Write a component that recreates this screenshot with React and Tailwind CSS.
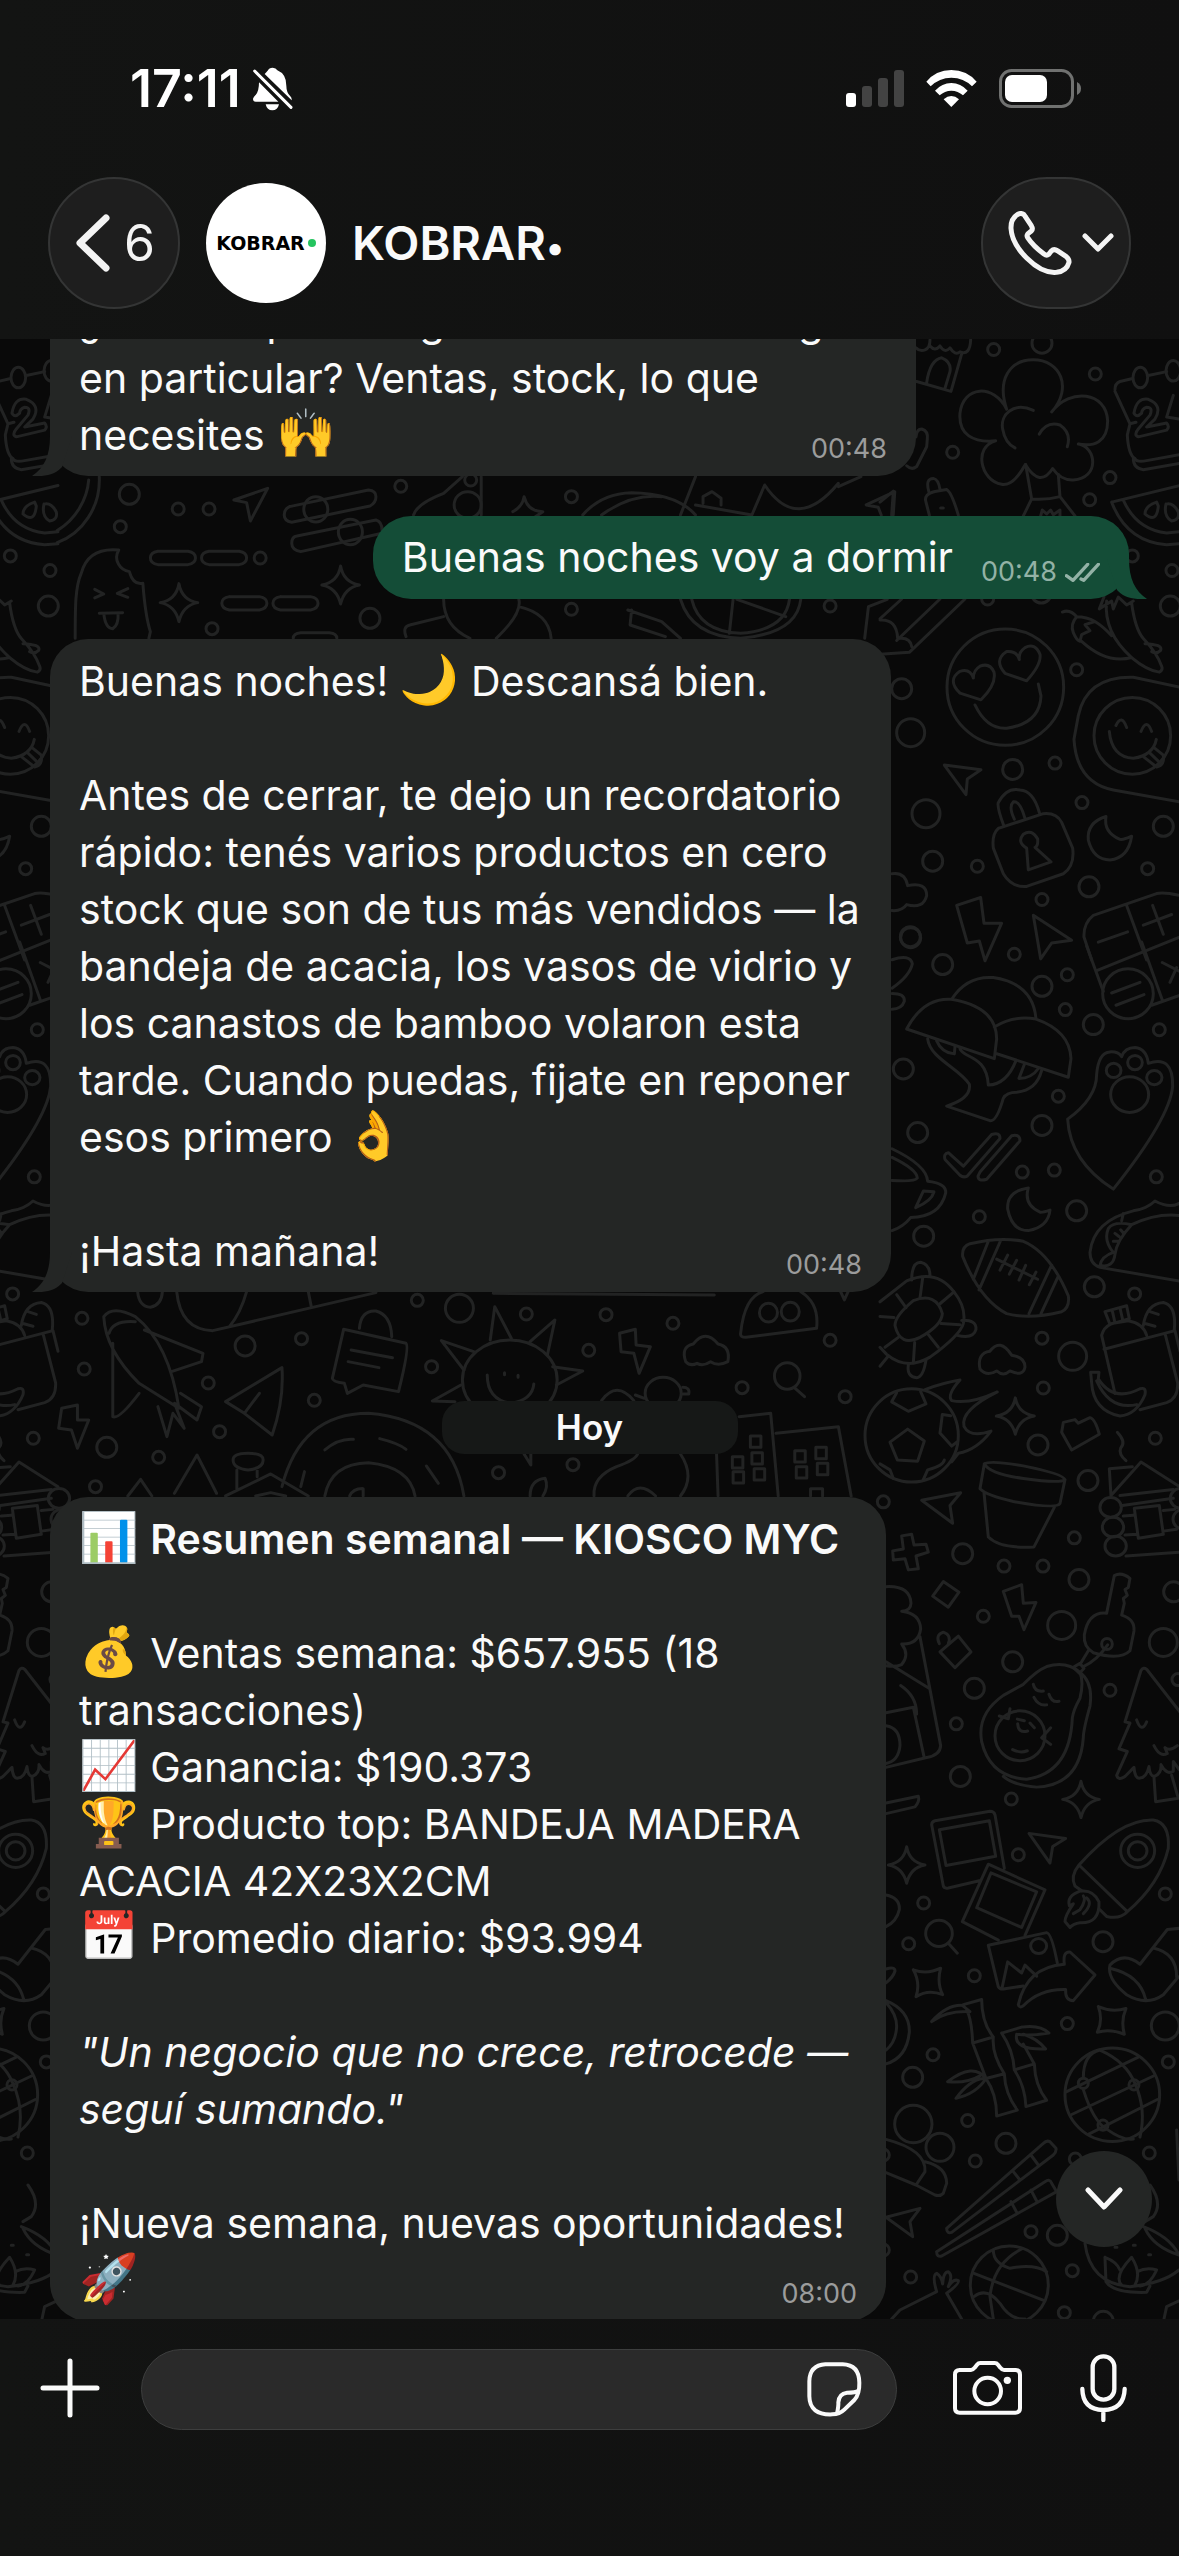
import React, { useState } from "react";

const bubbleText = "text-[41px] leading-[57px] text-[#fafafa] whitespace-pre-line";

// [cx, cy, size] per drawing group
const dotsA = [
  [341, 24, "s"], [486, 8, "m"], [646, 86, "s"], [218, 284, "s"], [690, 348, "s"], [629, 404, "s"],
  [757, 546, "s"], [876, 583, "s"], [871, 673, "m"], [590, 834, "s"], [65, 882, "m"], [92, 993, "l"],
  [398, 1086, "m"], [525, 1070, "s"], [138, 1198, "l"], [606, 1170, "s"], [850, 1230, "m"], [158, 1318, "m"],
  [292, 1331, "s"], [803, 1337, "s"], [627, 1383, "m"], [486, 1415, "s"], [91, 1509, "m"], [323, 655, "s"],
  [484, 640, "m"],
];
const dotsB = [
  [188, 62, "m"], [403, 36, "s"], [486, 117, "m"], [562, 88, "s"], [556, 176, "s"], [640, 214, "m"],
  [838, 227, "s"], [70, 326, "m"], [535, 395, "s"], [113, 487, "m"], [486, 469, "m"], [427, 587, "s"],
  [523, 582, "s"], [829, 599, "s"], [590, 685, "m"], [298, 700, "s"], [131, 749, "m"], [643, 877, "m"],
  [764, 895, "s"], [486, 1007, "s"], [578, 1053, "l"], [490, 1133, "s"], [474, 1277, "m"], [826, 1260, "s"],
  [624, 1367, "m"], [583, 1512, "s"], [248, 1552, "m"], [10, 1421, "s"], [92, -6, "m"],
];
const dotsC = [
  [372, 66, "s"], [489, 66, "s"], [597, 100, "m"], [310, 193, "s"], [545, 216, "l"], [398, 308, "m"],
  [283, 375, "m"], [229, 465, "s"], [690, 380, "s"], [850, 259, "l"], [881, 131, "m"], [894, 353, "s"],
  [241, 598, "m"], [394, 655, "s"], [415, 796, "s"], [131, 918, "s"], [86, 1021, "s"], [669, 1016, "m"],
  [856, 895, "s"], [283, 1102, "s"], [562, 1223, "s"], [856, 1229, "l"], [159, 1302, "s"], [98, 1359, "m"],
  [263, 1468, "s"], [865, 1320, "s"],
];
const dotsD = [
  [172, 523, "m"], [237, 567, "s"], [278, 567, "s"], [160, 620, "s"], [346, 714, "s"], [282, 926, "s"],
  [492, 895, "m"], [533, 499, "s"], [760, 530, "s"], [760, 868, "s"], [1104, 858, "s"], [626, 480, "s"],
];
const dotsE = [
  [109, 355, "s"], [326, 438, "m"], [401, 416, "s"], [112, 507, "s"], [277, 549, "s"], [418, 601, "s"],
  [142, 742, "m"], [292, 695, "s"], [211, 772, "s"], [127, 860, "s"], [555, 301, "s"], [611, 325, "l"],
  [700, 342, "s"], [806, 344, "s"], [783, 451, "s"], [895, 370, "s"], [574, 500, "s"], [987, 563, "s"],
  [1104, 421, "s"], [1124, 590, "s"], [663, 818, "s"], [762, 794, "s"],
];
const dotsF = [
  [480, 52, "l"], [678, 40, "m"], [586, 93, "s"], [1108, 69, "s"], [886, 87, "s"], [753, 305, "s"],
  [832, 316, "m"], [392, 441, "s"], [877, 422, "s"], [853, 548, "s"], [970, 574, "m"], [310, 75, "s"],
  [310, 360, "s"],
];

const radius = { s: 6, m: 10, l: 14 };

const star = (x, y, rx, ry) =>
  `M${x} ${y - ry}Q${x + rx * 0.15} ${y - ry * 0.15} ${x + rx} ${y}Q${x + rx * 0.2} ${y + ry * 0.15} ${x} ${y + ry}Q${x - rx * 0.2} ${y + ry * 0.15} ${x - rx} ${y}Q${x - rx * 0.15} ${y - ry * 0.15} ${x} ${y - ry}Z`;

const oval = (x, y, rx, ry) =>
  `M${x - rx} ${y}a${rx} ${ry} 0 1 0 ${rx * 2} 0a${rx} ${ry} 0 1 0 ${-rx * 2} 0`;

function Doodles({ x, y, sx, sy, dots, paths }) {
  return (
    <g transform={`translate(${x} ${y}) scale(${sx} ${sy})`}>
      {dots.map(([cx, cy, size]) => (
        <ellipse
          key={`${cx}-${cy}`}
          cx={cx}
          cy={cy}
          rx={radius[size] / sx}
          ry={radius[size] / sy}
          vectorEffect="non-scaling-stroke"
        />
      ))}
      {paths.map((d) => (
        <path key={d} d={d} vectorEffect="non-scaling-stroke" />
      ))}
    </g>
  );
}

const pathsA = [
  // shop and bottle
  "M110 105L213 130L245 35M140 108Q150 50 185 45Q215 55 210 80L195 122M108 20Q120 30 135 25Q150 20 150 0M150 15Q165 30 180 15Q195 35 210 20Q225 40 240 30Q270 40 272 0",
  "M108 245Q110 225 125 225Q145 230 142 250L140 270L110 320Q95 330 80 318",
  // tree
  "M380 175C350 100 390 50 460 50C540 50 580 120 515 182C570 120 680 130 683 205C683 260 640 270 595 263C650 270 660 350 580 354C550 355 530 340 518 325Q480 375 436 315Q400 370 365 365C300 355 280 270 347 255C280 260 235 240 240 185C250 115 340 110 380 175",
  "M460 178C400 155 360 190 368 225Q375 260 405 273M478 238Q500 205 540 215Q575 235 562 270M437 315L455 402Q500 405 540 396L535 340M455 402L430 445M540 396L585 445M482 445L487 430L500 440L512 430L520 442L540 430V445",
  "M165 383L200 378Q215 385 235 443M165 383Q130 390 138 410L148 443M147 385Q135 350 160 350Q175 352 180 378M182 425h8M0 410L40 382L35 443",
  // calendar
  "M705 125Q705 110 720 105L755 98M805 90L860 80M705 130L750 212L742 240Q745 290 765 300Q770 310 800 305L900 290M760 300Q760 325 790 328L900 312M750 212L768 208",
  oval(781, 95, 22, 26),
  oval(880, 78, 22, 26),
  "M762 185Q770 145 805 150Q850 165 825 200L800 220L860 210Q870 220 860 228L775 245Q760 240 775 225L810 190Q820 170 800 170Q785 175 785 185Q770 198 762 185M880 140L860 195L897 200",
  // watermelon
  "M695 410L900 368M695 410Q740 510 860 518L900 515M730 405Q770 480 860 488L900 485M830 410Q795 420 795 440Q830 465 835 420ZM858 415Q850 445 875 458Q900 455 895 435Q880 410 858 415",
  "M65 655L0 705M180 655L50 760M255 655L88 790L0 795M0 708Q50 705 53 755Q90 750 95 775",
  // heart eyes
  oval(376, 878, 175, 147),
  "M280 855Q270 830 240 838Q200 860 240 893L303 910Q350 870 342 840Q330 815 300 825Q280 835 280 855M418 808Q410 785 380 788Q340 810 375 843L440 862Q485 820 480 795Q465 765 435 778Q415 790 418 808M285 923Q320 985 380 982Q480 970 483 900L475 870",
  // chillies
  "M547 688Q570 680 590 700Q570 720 580 740Q590 760 600 762L605 745L630 735L615 720L645 712Q620 700 590 700M605 762Q680 820 755 803M645 712Q670 725 695 748M680 660Q670 740 755 803Q800 835 838 840Q850 835 845 825Q830 790 790 755Q765 730 755 665M658 680L672 650M700 680L715 650L740 670L760 660M658 680L695 660L700 680M795 768Q850 770 842 785Q830 795 815 788",
  "M900 878L760 853Q620 850 595 950L582 1010Q590 1120 700 1138L900 1168M688 990Q695 1055 760 1058Q820 1050 829 1010M708 975Q725 945 740 980M783 990Q800 955 815 990M792 1055L830 1080Q855 1075 850 1050L825 1033M810 1045L835 1065",
  oval(757, 1001, 115, 97),
  "M193 1075L303 1087L262 1110L258 1150Z",
  // padlock
  "M372 1230Q350 1180 355 1170Q380 1130 420 1138Q460 1140 478 1195M403 1212Q385 1180 400 1168Q420 1165 435 1210M355 1235L490 1198Q530 1195 545 1220L578 1285Q585 1330 550 1350L440 1382Q395 1385 370 1350L340 1285Q335 1250 355 1235M440 1285Q410 1270 430 1250Q455 1235 473 1262Q475 1280 465 1283L513 1320L445 1340Z",
  "M678 1205Q620 1220 625 1265Q640 1315 690 1315Q745 1310 755 1255Q730 1265 720 1263Q670 1245 678 1205",
  "M36 1350Q75 1345 83 1380Q140 1370 140 1405Q130 1440 80 1428Q65 1445 36 1443",
  "M230 1430L302 1410L312 1475L365 1475L315 1570L298 1520L262 1525Z",
  "M460 1455L575 1518L515 1525L482 1565Z",
  "M900 1405Q850 1395 830 1400L640 1455Q610 1475 612 1510L635 1568M740 1430L800 1568M655 1523L743 1497M790 1480L875 1453M818 1430L850 1503M650 1595L900 1510",
];

const pathsB = [
  "M620 15L670 130M785 5L847 152M815 165L900 140M695 134L780 107M708 165L792 138M847 57L900 80M870 107L890 70",
  oval(744, 136, 76, 63),
  "M36 50Q90 35 97 60Q90 90 36 122M36 135Q75 135 73 155Q65 175 36 175",
  // mushrooms
  "M80 225Q130 145 215 150Q350 170 350 250L343 300ZM215 150Q260 90 340 95Q460 110 468 200M343 220Q400 190 468 200Q570 230 573 300L565 347L348 287",
  "M143 250C150 300 240 325 268 365Q275 400 200 420L330 457Q350 460 370 400Q380 385 410 385Q470 380 485 330M240 275C250 300 320 290 325 367Q380 365 408 305M170 255Q185 285 223 288L225 270M433 315L417 350Q455 350 475 325",
  // paw
  "M563 453Q650 400 650 340Q655 285 690 283Q715 282 725 295Q735 272 765 272Q800 275 805 312Q880 290 878 370Q870 450 700 630Q570 560 563 453",
  oval(749, 391, 57, 45),
  oval(701, 330, 22, 18),
  oval(765, 310, 22, 18),
  oval(823, 348, 23, 18),
  "M195 555Q190 540 205 538L250 572L335 492Q360 485 360 502L262 597Q250 602 240 595ZM300 587L395 495Q420 490 420 508L320 605Q295 612 294 597Z",
  // cup
  "M36 528Q140 570 143 610Q200 615 197 640Q180 700 92 702Q70 725 36 735M36 550Q110 580 112 602Q105 612 36 608M130 635L162 637Q155 660 107 677Z",
  "M445 627Q380 635 383 680Q395 735 445 735Q505 725 510 683Q485 690 480 688Q430 670 445 627",
  // football
  "M248 800Q245 775 270 768Q360 750 430 762Q510 790 565 900Q570 930 545 940Q450 960 380 945Q300 910 248 800M325 762L280 858M362 760L297 885M515 822L447 945M535 850L483 945M350 807L473 858M383 797L360 835M410 810L388 845M437 823L417 860M468 840L448 872",
  // taco
  "M900 665Q870 680 825 660Q800 680 760 685Q640 710 630 790Q630 820 660 828L900 863M755 720Q830 690 900 697M755 720Q710 760 705 795Q700 830 660 823Q665 800 700 790Q670 760 685 730Q700 710 755 720M725 710L730 692M705 742l12 8M700 762h14M722 733l10 10",
  // turtle
  "M95 860Q95 815 122 815Q150 820 150 850M0 915L80 862Q170 830 222 890Q260 930 250 970Q240 1000 150 1055Q80 1090 20 1048L0 1030M100 912Q170 890 187 945Q185 975 120 1005Q60 1030 45 975Q45 950 100 912",
  "M128 855L120 905M222 890L180 920M240 973L183 970M175 1030L145 998M100 1070L104 1018M15 1030L55 1005M0 952L42 955M50 897L78 930M245 962Q290 960 288 985Q280 1010 232 1000M85 1075Q80 1105 110 1107Q130 1105 138 1062M0 1078L25 1052",
  "M300 1085Q290 1045 330 1040Q360 1005 395 1050Q435 1055 435 1080Q430 1105 390 1090Q370 1105 350 1090Q320 1105 300 1085",
  // groceries
  "M665 1000Q670 980 695 970L745 963Q790 970 800 1000M672 1035L885 988M665 1000L705 1147M675 940L740 925L748 958L690 972ZM697 938l8 30M720 930l8 30M790 975Q800 920 850 917Q890 925 883 985M810 940L835 947M795 970L825 977M885 988L900 1040M855 995L893 1120Q895 1160 860 1170L780 1188",
  "M632 1093L657 1093L655 1110Q700 1170 780 1135Q800 1130 795 1150Q770 1200 720 1204Q640 1190 635 1120ZM650 1115Q690 1190 770 1175",
  // ball on fire
  oval(95, 1253, 140, 118),
  "M83 1237L133 1267L113 1318L52 1315L30 1270ZM50 1145L35 1168L85 1192L138 1173L122 1142M212 1203L187 1200L180 1247L215 1280L230 1270M193 1315Q190 1330 143 1340L130 1365M0 1325L30 1340L40 1362",
  "M135 1137Q190 1120 240 1113Q200 1150 215 1165Q270 1175 352 1143Q240 1190 252 1230Q270 1260 333 1242Q290 1290 235 1298L215 1320",
  star(406, 1204, 57, 46),
  "M550 1220L585 1213L595 1222L630 1208Q645 1210 658 1250L575 1290L545 1245ZM712 1245Q740 1270 722 1285Q715 1300 738 1317",
  // pot
  "M313 1325Q330 1315 430 1330Q550 1350 555 1365L540 1425Q530 1440 400 1420Q320 1405 300 1388ZM313 1325Q330 1350 430 1362Q540 1375 555 1365M312 1398L325 1510Q360 1540 462 1535L523 1435",
  "M125 1417L242 1398L210 1430L218 1475Z",
  "M65 1507L95 1503L102 1530L138 1528L145 1548L108 1558L115 1590L85 1593L75 1565L40 1568L38 1545L70 1540Z",
  // cabin
  "M693 1405L688 1337L757 1332M693 1405L783 1320L900 1383M720 1405L880 1390M727 1430L880 1412M730 1457L760 1455M850 1443L885 1440M735 1505L770 1503M850 1495L890 1490M738 1558L900 1548M763 1437L838 1430L850 1503L775 1513Z",
  oval(692, 1435, 32, 25),
  oval(699, 1485, 32, 25),
  oval(707, 1533, 32, 25),
  oval(903, 1412, 32, 25),
  oval(911, 1465, 32, 25),
];

const pathsC = [
  // ice cream
  "M18 118Q90 115 93 160Q92 180 65 180Q120 185 122 225Q115 265 65 263Q90 290 65 315Q45 322 18 318M120 245L182 520Q180 545 140 550L18 575M18 308L147 375M62 368Q110 395 110 440M18 437L100 423L132 548M18 470Q60 475 60 520Q55 560 18 565",
  "M190 105L237 132L205 170L158 142ZM235 243L273 283L225 323L180 283ZM178 262Q165 240 190 233Q215 240 205 262",
  "M370 130L425 113L430 160L468 158L432 227L417 193L395 193Z",
  // key
  "M680 185L703 90Q725 80 750 97L745 120L735 125L742 140L730 148L733 160L725 190Q765 200 762 230L750 280Q720 305 640 285Q610 270 613 240Q625 180 680 185M683 265Q650 305 610 320M625 280L600 315M580 322L600 312L612 325L598 337Z",
  oval(681, 263, 16, 14),
  // avocado
  "M600 335Q560 305 500 320Q470 330 430 365L370 393Q290 440 305 510Q330 600 440 605Q570 590 577 450Q580 430 600 400Q612 360 600 335Q640 360 630 420Q610 480 610 500Q600 620 470 625Q400 620 370 598",
  oval(420, 495, 75, 63),
  "M460 365Q465 385 490 382M462 398Q475 420 500 417M507 390Q515 412 537 408M413 465Q415 490 443 483M412 453L433 457M450 463L463 475M398 530Q420 540 442 533M358 445L385 452L390 427M512 475L485 500L512 517",
  // pine
  "M783 330Q790 320 800 327L900 435M783 330L735 460L750 463L717 528L742 535L710 595Q715 610 735 598L762 575Q765 605 780 602Q800 600 807 573Q810 600 825 597Q845 590 843 568Q860 595 880 585V560L897 580M770 455Q785 490 800 460M822 520Q840 550 862 540L855 525Q870 535 892 520M822 600L827 662L895 653L875 595",
  star(603, 656, 55, 46),
  star(80, 822, 55, 46),
  "M18 665L115 648Q120 660 105 675L18 692",
  // photos
  "M155 720Q155 712 165 710L330 686Q342 686 345 695L373 830M155 720L190 875Q192 882 205 880L298 862M178 733L328 710L347 800L198 823ZM325 820L495 885L435 1000M325 820L247 965L355 1012M333 842L470 890L425 980L290 930Z",
  "M325 1025L500 993Q515 995 532 1070M325 1025L355 1130Q360 1138 375 1135L430 1128M367 1130L383 1067L425 1095L435 1075L470 1103",
  oval(476, 1027, 24, 19),
  "M415 1175Q440 1080 553 1073Q548 1040 570 1042L645 1100L580 1165Q555 1165 557 1137Q480 1135 430 1178Q418 1185 415 1175",
  "M447 742L557 755L518 775L510 817Z",
  // rocket
  "M597 822Q720 705 820 708Q870 715 865 780Q840 870 742 940Q720 960 680 952L660 935M597 822Q570 850 585 875L605 887M597 822L742 940",
  oval(773, 786, 51, 42),
  oval(773, 786, 28, 23),
  "M600 888Q560 900 568 925L580 920Q555 950 555 965L570 980Q580 970 600 968Q660 970 657 915Q640 885 605 888M610 900Q620 910 600 935L580 945M620 905Q640 920 610 945",
  oval(177, 995, 40, 33),
  "M205 1020L232 1045",
  "M900 982L862 985L780 1073Q730 1040 690 1075Q680 1110 740 1150Q800 1180 850 1150L895 1105M690 1083Q780 1100 797 1162M820 1032Q890 1045 890 1105",
  "M100 1087Q140 1100 182 1083Q170 1120 188 1150Q145 1135 108 1155Q122 1120 100 1087M655 1180Q695 1195 738 1185Q722 1215 733 1250Q690 1235 652 1245Q670 1215 655 1180",
  // bamboo
  "M155 1218Q200 1190 270 1193L247 1177Q200 1175 155 1218M250 1175L305 1162Q305 1220 340 1257L278 1272Q275 1210 260 1190M278 1272L318 1362L373 1350Q335 1300 340 1257M318 1362Q350 1400 350 1457L412 1442Q375 1400 373 1350M318 1362Q280 1320 203 1370Q260 1375 300 1355M310 1362Q270 1365 228 1412Q290 1400 318 1362",
  "M365 1247L425 1232M365 1247Q400 1290 403 1340L463 1325L430 1275M403 1340Q435 1380 438 1433L500 1417Q465 1380 463 1325M425 1232Q480 1225 507 1247Q450 1255 410 1250M410 1250Q400 1290 497 1287Q470 1260 430 1250",
  // globe
  oval(697, 1403, 142, 118),
  "M560 1395L775 1308M575 1453L822 1355M625 1503L832 1415M610 1360Q610 1300 660 1290Q740 1320 765 1375Q800 1440 780 1510M610 1390Q640 1470 680 1490Q730 1520 760 1515",
  oval(610, 1374, 15, 13),
  oval(762, 1378, 15, 13),
  oval(669, 1480, 15, 13),
  "M18 1165Q90 1190 88 1245Q80 1310 18 1325M18 1170Q50 1200 50 1230Q48 1270 18 1290M18 898Q60 905 58 935Q50 965 18 978M18 1085Q45 1078 45 1090Q40 1105 18 1120",
];

const pathsD = [
  "M132 470C134 560 110 640 76 668M118 480C116 540 100 600 76 632",
  "M311 540L356 505L333 603L328 548Z",
  "M385 560L490 510Q500 512 500 530T492 558L388 607Q378 603 378 585T385 560M395 648L500 600Q508 605 508 630M508 640L400 695Q388 690 388 670T395 648",
  oval(420, 568, 16, 38),
  oval(466, 636, 16, 38),
  "M210 694h40q10 4 10 20t-10 20h-40q-10-4-10-20t10-20M278 694h40q10 4 10 20t-10 20h-40q-10-4-10-20t10-20M305 830h40q10 4 10 20t-10 20h-40q-10-4-10-20t10-20M373 830h40q10 4 10 20t-10 20h-40q-10-4-10-20t10-20M390 955q0-15 10-17h38q10 2 10 17",
  star(453, 795, 25, 57),
  star(238, 848, 25, 57),
  // popsicle
  "M100 955C100 860 100 800 108 760C115 700 135 685 158 690C150 720 160 750 172 755C175 780 180 795 190 790C192 850 195 900 200 935L198 955M126 808l12 14l-12 12M170 806l-14 14l14 12M132 880L163 878M138 880Q140 925 150 926Q158 915 157 880",
  "M550 585Q555 550 590 520L615 470M640 470V585M682 575Q695 560 697 530Q702 575 722 575L712 590",
  oval(622, 555, 18, 40),
  "M775 585Q800 520 840 518Q900 520 925 585M800 585Q840 520 880 530M905 585L925 470M925 555L1000 585L1017 495Q1060 640 1115 490M1115 500L1145 470M1188 585L1190 515L1152 555L1168 562L1172 585M935 550v-20l12-15l12 20v20",
  "M540 950Q535 920 545 915L590 890M590 838Q590 920 625 955M690 838Q695 880 660 955M690 860Q730 880 733 955M835 870L880 905L905 955M840 870L838 915L885 950M905 838Q920 950 985 955Q1060 940 1065 838M920 838Q930 935 985 940Q1045 930 1050 838M975 838L970 940M980 838L1045 890",
  "M1150 955L1155 860L1180 838",
];

const pathsE = [
  "M235 275Q240 390 283 392L500 278M328 275Q320 340 305 380M410 275L414 320M183 275Q185 320 200 322Q215 315 216 275M656 280L950 285",
  // shuttle
  "M138 350Q150 315 180 350Q225 430 238 625L185 550Q140 450 138 350M145 400Q150 360 180 365M192 390L270 460L268 485L228 515M150 430L150 650Q158 660 185 580M210 620L222 710L230 640L245 685L232 610L262 660L268 620L240 580",
  "M82 625L103 615V660L118 660L103 745L95 690L78 685Z",
  "M375 503L300 605L325 640L362 705Q378 600 375 503M325 640L345 580",
  "M457 388L540 430Q545 440 530 575L483 555L462 580L458 550Q442 545 442 535ZM478 385Q480 330 500 333Q520 345 521 410M467 450L522 473M463 485L504 503",
  // sun
  oval(678, 540, 63, 120),
  "M652 420L658 320L680 415M705 425L738 360L728 465M735 500L775 513L740 555M630 455L587 422L617 510M613 555L575 603L605 605M648 525Q648 600 680 610Q708 600 710 552M671 518v6M689 526v6M697 762L706 795V762",
  "M824 400L845 388L846 435L865 440L850 520L843 460L826 455Z",
  "M912 485Q905 440 922 432Q938 385 955 432Q972 440 968 485Q955 500 945 485Q935 500 927 490Q918 500 912 485",
  "M985 400Q990 290 1015 275M1065 275Q1090 310 1086 385L992 412Q984 412 985 400M1118 275l5 25l5-25",
  oval(1022, 338, 12, 28),
  oval(1051, 335, 12, 28),
  oval(1047, 528, 17, 40),
  "M1056 562L1070 590",
  oval(882, 580, 24, 48),
  "M800 602Q820 540 843 602M908 562q10 0 8 20h-8M845 585l12 10",
  // rainbow
  "M375 860Q400 640 490 640Q600 660 617 888M432 888Q440 790 490 788Q545 800 552 888M432 750Q450 715 470 718M505 716Q530 730 540 748M567 798L583 850M405 815L400 860M465 888Q470 865 483 866V888",
  "M170 888L187 838L202 888M232 880L262 765L288 880M300 888L360 822L410 888M340 888L360 878L380 888M310 780Q310 760 330 760T350 780Q350 805 330 810Q310 805 310 780M315 810V870M342 810V830",
  // buildings
  "M955 888L953 762M983 650L1025 640L1035 888M1032 700L1115 680L1132 888",
  "M998 708h14v34h-14zM1000 758h14v34h-14zM974 770h14v34h-14zM975 815h14v34h-14zM1003 806h14v34h-14zM1057 752h14v34h-14zM1085 742h14v34h-14zM1059 800h14v34h-14zM1087 790h14v34h-14zM1078 888v-22h16v22",
  "M790 888Q788 830 820 800Q845 780 848 762M905 762Q925 830 905 888M705 888Q705 840 725 835Q730 860 722 888M835 888Q850 840 872 888",
];

const pathsF = [
  oval(400, -18, 56, 56),
  "M318 28Q440 60 435 125L408 165L318 128M435 95Q500 110 500 160L490 190Q480 200 465 195L408 165",
  // chopsticks
  "M500 295L790 40Q800 30 810 35L828 55Q830 65 820 75L515 307Q500 312 500 295M700 125L720 150M755 78L775 105M470 365L795 155Q810 145 815 160L830 185L485 378Q470 382 470 365M693 215L710 247M753 180L770 213",
  "M318 262L420 235L390 275L398 320Z",
  // basketball
  oval(688, 465, 117, 117),
  "M582 430L793 512M640 360Q640 400 690 415Q760 400 800 425M725 357Q640 400 630 500L640 567M582 500Q620 470 660 520Q690 570 735 567",
  "M335 567L360 540L470 485Q455 435 470 430Q485 440 488 462Q490 425 505 425Q520 435 505 470Q520 445 535 452Q540 460 500 490L545 567",
  // lotus bowl
  "M915 340Q930 460 1050 470Q1150 460 1197 420M975 382L978 455Q1000 490 1100 487L1110 468M975 382Q1010 395 1020 420M1025 465Q1000 440 1055 382Q1085 430 1065 465M1072 425Q1100 410 1130 420Q1110 465 1080 468M1110 165Q1150 220 1120 260L1095 275M1090 290Q1170 320 1197 375M1095 295Q1120 350 1197 375M1005 352h6M1060 346h6M1106 374h6M1197 513L1160 530L1152 567M1190 0L1197 150",
];

function Wallpaper() {
  return (
    <svg
      className="absolute inset-0 h-full w-full"
      viewBox="0 339 1179 1980"
      preserveAspectRatio="xMidYMin slice"
      fill="none"
      stroke="#222323"
      strokeWidth="3"
      strokeLinecap="round"
      strokeLinejoin="round"
      aria-hidden="true"
    >
      <defs>
        <g id="doodle-column">
          <Doodles x={880} y={340} sx={0.3333} sy={0.3954} dots={dotsA} paths={pathsA} />
          <Doodles x={880} y={940} sx={0.3333} sy={0.3954} dots={dotsB} paths={pathsB} />
          <Doodles x={880} y={1540} sx={0.3333} sy={0.3954} dots={dotsC} paths={pathsC} />
          <Doodles x={780} y={2130} sx={0.3333} sy={0.3333} dots={dotsF} paths={pathsF} />
        </g>
      </defs>
      <use href="#doodle-column" />
      <use href="#doodle-column" x="-1122" />
      <Doodles x={0} y={320} sx={0.7519} sy={0.3333} dots={dotsD} paths={pathsD} />
      <Doodles x={0} y={1200} sx={0.7519} sy={0.3333} dots={dotsE} paths={pathsE} />
    </svg>
  );
}

function StatusBar() {
  return (
    <div className="flex h-[177px] items-center justify-between pl-[130px] pr-[98px]">
      <div className="flex items-center gap-3">
        <span className="text-[52px] leading-[60px] font-semibold text-white">17:11</span>
        <svg className="h-[44px] w-[40px]" viewBox="0 0 120 130" fill="#fff" role="img" aria-label="Silencio">
          <path d="M18 45L76 103H8Q0 103 0 94Q2 88 8 83Q18 72 18 45ZM35 20Q43 11 44 10Q48 1 59 1Q69 1 73 9Q100 20 100 55Q100 75 112 87Q117 92 116 99ZM38 111H78Q74 129 58 129Q42 129 38 111Z" />
          <path d="M5 11L114 120" stroke="#fff" strokeWidth="9" strokeLinecap="round" />
        </svg>
      </div>
      <div className="flex items-center gap-[22px]">
        <svg className="h-[38px] w-[58px]" viewBox="0 0 58 38" aria-hidden="true">
          <rect x="0" y="23" width="10" height="14" rx="3" fill="#fff" />
          <rect x="16" y="16" width="10" height="21" rx="3" fill="#434343" />
          <rect x="32" y="8" width="10" height="29" rx="3" fill="#434343" />
          <rect x="48" y="0" width="10" height="37" rx="3" fill="#434343" />
        </svg>
        <svg className="h-[38px] w-[51px]" viewBox="0 0 153 114" fill="#fff" aria-hidden="true">
          <path d="M1 35Q30 0 76 0Q122 0 152 35L138 49Q113 23 76 23Q40 23 14 49Z" />
          <path d="M27 62Q48 39 76 39Q104 39 125 62L111 76Q96 62 76 62Q56 62 41 76Z" />
          <path d="M53 88Q64 78 76 78Q88 78 99 88L76 111Z" />
        </svg>
        <svg className="h-[40px] w-[82px]" viewBox="0 0 82 40" aria-hidden="true">
          <rect x="1.5" y="1.5" width="72" height="36" rx="11" fill="none" stroke="#707170" strokeWidth="3" />
          <rect x="6" y="6" width="42" height="27" rx="7" fill="#fff" />
          <path d="M78 13Q82 15 82 19.5T78 26Z" fill="#707170" />
        </svg>
      </div>
    </div>
  );
}

function ChatHeader() {
  return (
    <div className="flex items-center px-12 pb-[30px]">
      <button
        type="button"
        aria-label="Volver"
        className="flex h-[132px] w-[132px] items-center gap-[14px] rounded-full border-2 border-[#343535] bg-[#1e1e1e] pl-[26px] text-[50px] text-[#f4f4f4]"
      >
        <svg className="h-[58px] w-[34px]" viewBox="0 0 34 58" fill="none" stroke="#f4f4f4" strokeWidth="7" strokeLinecap="round" strokeLinejoin="round">
          <path d="M30 4L4 29L30 54" />
        </svg>
        6
      </button>
      <div className="ml-[26px] flex h-[120px] w-[120px] items-center justify-center gap-[3px] rounded-full bg-white font-['DejaVu_Sans'] text-[19px] font-bold text-black">
        KOBRAR
        <span className="h-2 w-2 rounded-full bg-[#25c45f]" />
      </div>
      <h1 className="ml-[26px] flex-1 text-[47px] font-semibold text-[#fafafa]">
        KOBRAR<span className="text-4xl">•</span>
      </h1>
      <button
        type="button"
        aria-label="Llamar"
        className="flex h-[132px] w-[150px] items-center justify-center gap-[10px] rounded-full border-2 border-[#343535] bg-[#1e1e1e] pl-[10px]"
      >
        <svg className="h-[64px] w-[64px]" viewBox="0 0 192 192" fill="none" stroke="#f4f4f4" strokeWidth="15" strokeLinejoin="round">
          <path d="M48 11Q38 4 28 11Q8 24 9 52C12 110 88 190 146 184Q176 180 183 154Q184 144 175 137L148 119Q138 112 130 120L122 130Q116 135 108 129Q76 106 59 80Q55 74 60 68L70 60Q76 54 70 44L52 17Q50 13 48 11Z" />
        </svg>
        <svg className="h-[20px] w-[32px]" viewBox="0 0 32 20" fill="none" stroke="#f4f4f4" strokeWidth="5" strokeLinecap="round" strokeLinejoin="round">
          <path d="M3 3L16 16L29 3" />
        </svg>
      </button>
    </div>
  );
}

// Emoji are set a little larger than the letters around them
const withEmoji = (text) =>
  text.split(/(\p{Extended_Pictographic})/u).map((part, i) =>
    i % 2 ? (
      <span key={i} className="text-5xl leading-10">
        {part}
      </span>
    ) : (
      part
    )
  );

function Incoming({ time, tail, className, children }) {
  return (
    <article className={`relative rounded-[38px] bg-[#242625] px-[29px] pt-[14px] pb-3 ${className}`}>
      <div className={bubbleText}>{children}</div>
      <time className="absolute right-[29px] bottom-[13px] text-[27px] leading-7 text-[#9b9c9c]">{time}</time>
      {tail && (
        <svg className="absolute bottom-0 -left-[18px] h-10 w-10" viewBox="0 0 40 40" fill="#242625" aria-hidden="true">
          <path d="M18 0C18 20 12 32 0 40C14 41 24 38 30 31L40 0Z" />
        </svg>
      )}
    </article>
  );
}

function Composer() {
  const [message, setMessage] = useState("");

  return (
    <footer className="relative flex h-[237px] items-start bg-linear-to-r from-[#131413] to-[#101010] pt-[30px] pr-[52px] pl-10">
      <button type="button" aria-label="Adjuntar" className="flex h-[78px] w-[60px] items-center">
        <svg className="h-[60px] w-[60px]" viewBox="0 0 60 60" stroke="#fafafa" strokeWidth="5" strokeLinecap="round">
          <path d="M3 30H57M30 3V57" />
        </svg>
      </button>
      <div className="mr-14 ml-[41px] flex h-[81px] min-w-0 flex-1 items-center rounded-full border border-[#3d3e3e] bg-[#2a2a2a] pr-[34px] pl-10">
        <input
          type="text"
          aria-label="Mensaje"
          value={message}
          onChange={(e) => setMessage(e.target.value)}
          className="min-w-0 flex-1 bg-transparent text-[41px] text-[#fafafa] outline-none"
        />
        <button type="button" aria-label="Stickers">
          <svg className="h-[55px] w-[55px]" viewBox="0 0 165 165" fill="none" stroke="#fafafa" strokeWidth="12" strokeLinejoin="round">
            <path d="M55 7H107Q156 8 157 62Q158 96 142 114L112 143Q98 157 76 157Q8 160 7 103V58Q8 10 55 7Z" />
            <path d="M90 156Q95 130 94 121Q96 95 120 92Q145 92 155 86" />
          </svg>
        </button>
      </div>
      <button type="button" aria-label="Cámara" className="flex h-[78px] items-center">
        <svg className="h-[54px] w-[69px]" viewBox="0 0 207 162" fill="none" stroke="#fafafa" strokeWidth="12" strokeLinejoin="round">
          <path d="M20 27H54Q60 27 65 20L72 11Q76 6 82 6H125Q131 6 135 11L142 20Q147 27 153 27H187Q201 27 201 41V142Q201 155 187 155H20Q6 155 6 142V41Q6 27 20 27Z" />
          <circle cx="104" cy="90" r="40" />
          <circle cx="163" cy="58" r="11" fill="#fafafa" stroke="none" />
        </svg>
      </button>
      <button type="button" aria-label="Grabar audio" className="ml-[58px] flex h-[78px] items-center">
        <svg className="h-[68px] w-[47px]" viewBox="0 0 141 204" fill="none" stroke="#fafafa" strokeWidth="13" strokeLinecap="round">
          <rect x="38" y="7" width="65" height="130" rx="32" />
          <path d="M7 105Q8 167 70 168Q132 167 134 105M70 168V198" />
        </svg>
      </button>
    </footer>
  );
}

export default function App() {
  return (
    <div className="flex h-screen flex-col overflow-hidden bg-[#090909] font-[Inter,'Noto_Color_Emoji',sans-serif]">
      <header className="relative z-10 bg-linear-to-r from-[#131413] to-[#101010]">
        <StatusBar />
        <ChatHeader />
      </header>

      <main className="relative min-h-0 flex-1 overflow-hidden">
        <Wallpaper />
        <div className="relative -mt-[60px] flex flex-col px-[50px]">
          <Incoming time="00:48" tail className="w-full max-w-[866px]">
            {withEmoji("¿Querés que te diga el resumen de algo\nen particular? Ventas, stock, lo que\nnecesites 🙌")}
          </Incoming>

          <article className="relative mt-10 flex items-end gap-7 self-end rounded-[38px] bg-[#144d37] px-[29px] py-[13px]">
            <p className={bubbleText}>Buenas noches voy a dormir</p>
            <span className="flex items-center gap-2 text-[27px] leading-7 text-[#93b2a6]">
              <time>00:48</time>
              <svg className="h-[19px] w-[35px]" viewBox="0 0 105 57" fill="none" stroke="#93b2a6" strokeWidth="10" strokeLinecap="round" strokeLinejoin="round">
                <path d="M4 38L24 52L68 4M48 48L56 52L100 4" />
              </svg>
            </span>
            <svg className="absolute -right-[18px] bottom-0 h-10 w-10" viewBox="0 0 40 40" fill="#144d37" aria-hidden="true">
              <path d="M22 0C22 20 28 32 40 40C26 41 16 38 10 31L0 0Z" />
            </svg>
          </article>

          <Incoming time="00:48" tail className="mt-10 w-full max-w-[841px]">
            {withEmoji(
              "Buenas noches! 🌙 Descansá bien.\n\nAntes de cerrar, te dejo un recordatorio\nrápido: tenés varios productos en cero\nstock que son de tus más vendidos — la\nbandeja de acacia, los vasos de vidrio y\nlos canastos de bamboo volaron esta\ntarde. Cuando puedas, fijate en reponer\nesos primero 👌\n\n¡Hasta mañana!"
            )}
          </Incoming>

          <div className="mt-[109px] w-[296px] self-center rounded-[22px] bg-[#161817] text-center text-[35px] leading-[53px] font-semibold text-[#fafafa]">
            Hoy
          </div>

          <Incoming time="08:00" className="mt-[43px] w-full max-w-[836px]">
            {withEmoji("📊 ")}
            <strong className="font-semibold">Resumen semanal — KIOSCO MYC</strong>
            {withEmoji(
              "\n\n💰 Ventas semana: $657.955 (18\ntransacciones)\n📈 Ganancia: $190.373\n🏆 Producto top: BANDEJA MADERA\nACACIA 42X23X2CM\n📅 Promedio diario: $93.994\n\n"
            )}
            <em>{'"Un negocio que no crece, retrocede —\nseguí sumando."'}</em>
            {withEmoji("\n\n¡Nueva semana, nuevas oportunidades!\n🚀")}
          </Incoming>
        </div>

        <button
          type="button"
          aria-label="Ir al final"
          className="absolute right-[27px] bottom-[72px] flex h-24 w-24 items-center justify-center rounded-full bg-[#242625]"
        >
          <svg className="h-[24px] w-[38px]" viewBox="0 0 38 24" fill="none" stroke="#fafafa" strokeWidth="5" strokeLinecap="round" strokeLinejoin="round">
            <path d="M3 3L19 20L35 3" />
          </svg>
        </button>
      </main>

      <Composer />
    </div>
  );
}
